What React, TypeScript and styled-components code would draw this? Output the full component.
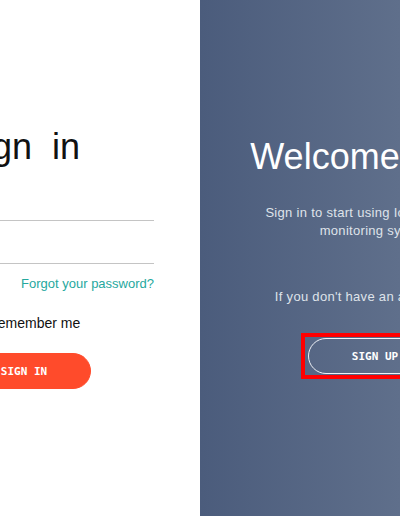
import React from "react";
import styled, { createGlobalStyle } from "styled-components";

const GlobalStyle = createGlobalStyle`
  html, body {
    margin: 0;
    padding: 0;
    width: 100%;
    height: 100%;
    overflow: hidden;
    background: #ffffff;
  }
  #root { height: 100%; }
  *, *::before, *::after { box-sizing: border-box; }
`;

const Stage = styled.div`
  display: flex;
  width: 400px;
  height: 516px;
  overflow: hidden;
  font-family: "Liberation Sans", Arial, sans-serif;
`;

const SignInPanel = styled.section`
  flex: 0 0 200px;
  display: flex;
  justify-content: flex-end;
  overflow: hidden;
  background: #ffffff;
`;

const SignInForm = styled.form`
  flex: 0 0 360px;
  height: 100%;
  display: flex;
  flex-direction: column;
  align-items: center;
  justify-content: center;
  padding: 0 46px;
`;

const Heading = styled.h1<{ $wide?: boolean }>`
  margin: 0;
  font-size: 36px;
  line-height: 40px;
  font-weight: 400;
  word-spacing: ${(p) => (p.$wide ? 10 : 0)}px;
  white-space: nowrap;
`;

const Title = styled(Heading)`
  margin-bottom: 11px;
  color: #111111;
`;

const Field = styled.input`
  align-self: stretch;
  height: 43px;
  padding: 13px 0;
  border: none;
  border-bottom: 1px solid #c4c4c4;
  background: transparent;
  font: 14px/16px "Liberation Sans", Arial, sans-serif;
  outline: none;
`;

const ForgotLink = styled.a`
  align-self: flex-end;
  margin-top: 12px;
  font-size: 13px;
  line-height: 16px;
  color: #26a89e;
  text-decoration: none;
  white-space: nowrap;
`;

const RememberRow = styled.label`
  margin-top: 22px;
  display: flex;
  align-items: center;
  font-size: 14px;
  line-height: 18px;
  color: #111111;
  white-space: nowrap;
`;

const Check = styled.input`
  margin: 0 12px 0 3px;
  width: 13px;
  height: 13px;
`;

const PillButton = styled.button<{ $ghost?: boolean }>`
  height: 36px;
  padding: 0 43px;
  border-radius: 18px;
  border: 1px solid ${(p) => (p.$ghost ? "#eef1f6" : "#ff4b2b")};
  background: ${(p) => (p.$ghost ? "transparent" : "#ff4b2b")};
  color: #ffffff;
  font: bold 11px/1 "DejaVu Sans Mono", "Liberation Mono", monospace;
  letter-spacing: 0;
  text-transform: uppercase;
  white-space: nowrap;
  cursor: pointer;
`;

const SubmitButton = styled(PillButton)`
  margin: 21px 0 0 8px;
`;

const OverlayPanel = styled.section`
  flex: 0 0 350px;
  display: flex;
  flex-direction: column;
  align-items: center;
  justify-content: center;
  text-align: center;
  color: #ffffff;
  background: linear-gradient(to right, #4b5c7c 0%, #5f6f8b 57%, #6c7b95 100%);
`;

const Lead = styled.p<{ $gap: number }>`
  margin: ${(p) => p.$gap}px 0 0;
  font-size: 13px;
  line-height: 18px;
  letter-spacing: 0.3px;
  color: #dfe3ea;
  white-space: nowrap;
`;

const Highlight = styled.div`
  margin-top: 27px;
  display: flex;
  padding: 1px 3px;
  border: 4px solid #ff0000;
`;

export default function App() {
  return (
    <>
      <GlobalStyle />
      <Stage>
        <SignInPanel>
          <SignInForm onSubmit={(e) => e.preventDefault()}>
            <Title $wide>Sign in</Title>
            <Field type="email" aria-label="Email" />
            <Field type="password" aria-label="Password" />
            <ForgotLink href="#">Forgot your password?</ForgotLink>
            <RememberRow>
              <Check type="checkbox" />
              Remember me
            </RememberRow>
            <SubmitButton type="submit">Sign in</SubmitButton>
          </SignInForm>
        </SignInPanel>
        <OverlayPanel>
          <Heading>Welcome Back!</Heading>
          <Lead $gap={27}>
            Sign in to start using IoT-based data
            <br />
            monitoring system
          </Lead>
          <Lead $gap={48}>If you don't have an account yet?</Lead>
          <Highlight>
            <PillButton type="button" $ghost>
              Sign up
            </PillButton>
          </Highlight>
        </OverlayPanel>
      </Stage>
    </>
  );
}
